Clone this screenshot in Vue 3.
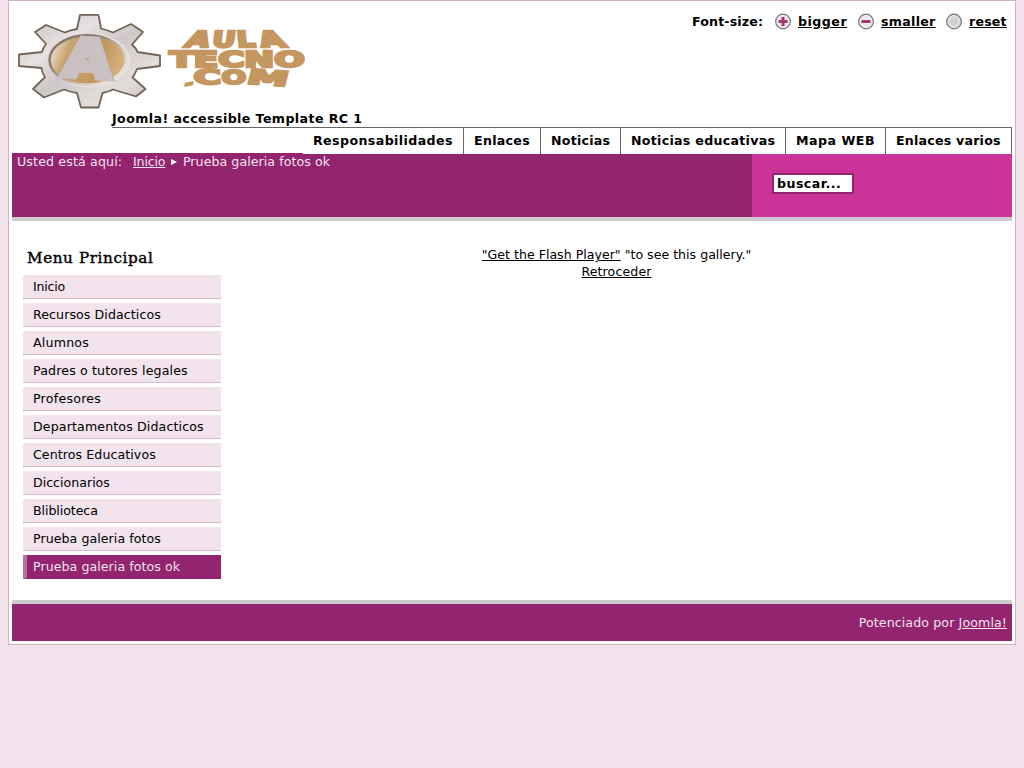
<script setup>
const tabs = [
  { name: 'Responsabilidades', width: 161, spacing: 0.41 },
  { name: 'Enlaces', width: 77, spacing: 0.3 },
  { name: 'Noticias', width: 80, spacing: 0.25 },
  { name: 'Noticias educativas', width: 165, spacing: 0.29 },
  { name: 'Mapa WEB', width: 100, spacing: 0.5 },
  { name: 'Enlaces varios', width: 126, spacing: 0.22 }
]
const sizes = [
  { name: 'bigger', width: 50, spacing: 0.5 },
  { name: 'smaller', width: 54, spacing: 0.3 },
  { name: 'reset', width: 39, spacing: 0.2 }
]
const menu = [
  { name: 'Inicio', spacing: -0.2 },
  { name: 'Recursos Didacticos', spacing: 0.08 },
  { name: 'Alumnos', spacing: 0.2 },
  { name: 'Padres o tutores legales', spacing: 0.15 },
  { name: 'Profesores', spacing: 0.25 },
  { name: 'Departamentos Didacticos', spacing: 0.13 },
  { name: 'Centros Educativos', spacing: 0.08 },
  { name: 'Diccionarios', spacing: 0 },
  { name: 'Bliblioteca', spacing: -0.08 },
  { name: 'Prueba galeria fotos', spacing: 0.06 },
  { name: 'Prueba galeria fotos ok', spacing: 0.06 }
]
</script>

<template>
  <div class="wrapper">
    <header class="header">
      <svg class="logo" width="300" height="104" viewBox="12 8 300 104">
        <defs>
          <linearGradient id="metal" x1="0" y1="0" x2="1" y2="1">
            <stop offset="0" stop-color="#c5bcbc" />
            <stop offset=".3" stop-color="#e6e0e0" />
            <stop offset=".5" stop-color="#d0c8c8" />
            <stop offset=".75" stop-color="#e3dddc" />
            <stop offset="1" stop-color="#bdb3b1" />
          </linearGradient>
          <linearGradient id="bronze" x1="0" y1="0" x2="1" y2=".25">
            <stop offset=".05" stop-color="#f1eadf" />
            <stop offset=".3" stop-color="#c9a470" />
            <stop offset=".75" stop-color="#c4975b" />
            <stop offset="1" stop-color="#d3ae7c" />
          </linearGradient>
          <linearGradient id="rim" x1="0" y1="0" x2="1" y2="1">
            <stop offset=".3" stop-color="#877a6d" />
            <stop offset=".65" stop-color="#cfc5bb" />
            <stop offset="1" stop-color="#f6f3ef" />
          </linearGradient>
        </defs>
        <path d="M80 14.800H97.500Q98.500 15 98.800 16L101 28.500Q107 30 113 32.500L131 24L143 32L132 44.500Q136 48 137.500 52L160 55.500V66L137 69Q135 74 132.500 77.500L145.500 89L136 96.500L113 89.500Q108 92 102.500 93L98.500 107.500H81L77 93Q70 92 64 89.500L44 97.500L33 89L45 77Q42 73 41.500 68L19 66V54.500L42 52Q43 48 46 44L35 32L46 25L65 32.500Q70 30 77 29Z" fill="url(#metal)" stroke="#716456" stroke-width="1.800" stroke-linejoin="round" />
        <ellipse cx="89.500" cy="60.500" rx="41" ry="27" fill="#e6e0dd" />
        <ellipse cx="87.500" cy="60" rx="38" ry="24.800" fill="url(#bronze)" stroke="url(#rim)" stroke-width="2.500" />
        <g transform="matrix(1 .06 -.1 1 62 75.500)">
          <text class="emblem" x="0" y="0" textLength="48" lengthAdjust="spacingAndGlyphs">A</text>
        </g>
        <g class="wordmark">
          <text transform="matrix(1.4 0 -.4 1 183.500 46.800)">A</text>
          <text transform="matrix(1.3 0 -.13 1 211.500 46.800)">U</text>
          <text transform="matrix(1.32 0 .1 1 237.500 46.800)">L</text>
          <text transform="matrix(1.5 0 .4 1 262 46.800)">A</text>
          <text transform="matrix(1 0 0 1 169.500 66.500)" textLength="135" lengthAdjust="spacingAndGlyphs">TECNO</text>
          <text class="low" transform="matrix(1.5 -.3 -.1 .7 183 86.500)">.</text>
          <text class="low" transform="matrix(1.85 0 .05 1 194 83.500)">C</text>
          <text class="low" transform="matrix(1.45 0 0 1 221.500 83.500)">O</text>
          <text class="low" transform="matrix(2.050 .14 -.25 1 246 83.500)">M</text>
        </g>
      </svg>
      <div class="sizes">
        <span class="label">Font-size:</span>
        <a v-for="(s, i) in sizes" :key="s.name">
          <svg width="18" height="18" viewBox="0 0 18 18">
            <circle cx="9" cy="8.500" r="7.300" :fill="i === 2 ? '#dedede' : '#eee9ee'" stroke="#777" stroke-width="1.200" />
            <path v-if="i < 2" d="M4.500 8.500H13.500" stroke="#a5386f" stroke-width="3" />
            <path v-if="i === 0" d="M9 4V13" stroke="#a5386f" stroke-width="3" />
            <circle v-if="i === 2" cx="9" cy="8.500" r="4" fill="#d1d1d1" />
          </svg><u :style="{ width: s.width + 'px', letterSpacing: s.spacing + 'px' }">{{ s.name }}</u>
        </a>
      </div>
      <div class="title">Joomla! accessible Template RC 1</div>
    </header>
    <nav class="tabs"><a v-for="t in tabs" :key="t.name" :style="{ width: t.width + 'px', letterSpacing: t.spacing + 'px' }">{{ t.name }}</a></nav>
    <div class="band">
      <div class="crumbs"><span>Usted está aquí:</span><u>Inicio</u><i class="arrow"></i><span>Prueba galeria fotos ok</span></div>
      <div class="search"><input value="buscar..." aria-label="buscar" /></div>
    </div>
    <main class="content">
      <aside>
        <h3>Menu Principal</h3>
        <ul><li v-for="(m, i) in menu" :key="m.name" :class="{ active: i === menu.length - 1 }" :style="{ letterSpacing: m.spacing + 'px' }">{{ m.name }}</li></ul>
      </aside>
      <section><div><u>"Get the Flash Player"</u> "to see this gallery."</div><div class="back"><u>Retroceder</u></div></section>
    </main>
    <footer>Potenciado por&nbsp;<u>Joomla!</u></footer>
  </div>
</template>

<style>
body { background: #f2e3ec; }
</style>
<style scoped>
.wrapper { box-sizing: border-box; width: 1008px; height: 645px; margin-left: 8px; padding: 0 3px 3px; border: 1px solid #d5aec5; background: #fff; font: 12.6px/17px "DejaVu Sans", sans-serif; color: #000; }
.header { position: relative; height: 126px; }
.logo { position: absolute; left: 0; top: 7px; }
.emblem { font: bold 51px "DejaVu Sans", sans-serif; fill: #c9c1c1; stroke: #c9c1c1; stroke-width: 6px; filter: drop-shadow(0 0 .6px #77685a); }
.wordmark { font: bold 22px "DejaVu Sans", sans-serif; fill: #c49760; stroke: #c49760; stroke-width: 2.500px; }
.wordmark .low { font-size: 20px; stroke-width: 2.300px; }
.sizes { position: absolute; right: 4px; top: 12px; display: flex; font-weight: bold; line-height: 18px; }
.sizes .label { width: 72px; letter-spacing: .15px; }
.sizes a { display: flex; margin-left: 10px; }
.sizes a:nth-of-type(2) { margin-left: 9px; }
.sizes svg { margin-right: 6px; }
.sizes u { white-space: nowrap; }
.title { position: absolute; left: 100px; top: 109px; font-weight: bold; letter-spacing: .42px; }
.tabs { display: flex; justify-content: flex-end; box-sizing: border-box; height: 27px; margin-left: 100px; border-top: 1px solid #666; font-weight: bold; line-height: 26px; }
.tabs a { box-sizing: border-box; padding-left: 10px; border-right: 1px solid #666; white-space: nowrap; }
.band { display: flex; height: 63px; border-bottom: 4px solid #d0c8cf; background: #93246f; }
.crumbs { display: flex; align-items: center; box-sizing: border-box; width: 740px; height: 17px; padding-left: 5px; color: #f2e3ec; margin-top: -1px; background: linear-gradient(#93246f, #93246f) no-repeat 0 0 / 291px 1px; }
.crumbs span:first-child { width: 116px; letter-spacing: .15px; }
.crumbs u { letter-spacing: -.15px; }
.crumbs span:last-child { letter-spacing: .06px; }
.arrow { width: 0; height: 0; margin: 0 5.500px 0 6px; border-left: 6px solid #fff; border-top: 3.500px solid transparent; border-bottom: 3.500px solid transparent; }
.search { box-sizing: border-box; width: 260px; padding: 19px 0 0 20px; background: #cc3399; }
.search input { display: block; box-sizing: border-box; width: 82px; height: 21px; padding: 0 3px; border: 2px solid #93246f; border-radius: 0; background: #fff; font: bold 12.6px "DejaVu Sans", sans-serif; letter-spacing: .45px; color: #000; }
.content { display: flex; height: 379px; }
aside { width: 198px; margin-left: 11px; }
h3 { margin: 27px 0 7px; padding-left: 4px; font: 500 15.200px/20px "DejaVu Serif", serif; letter-spacing: .6px; -webkit-text-stroke: .4px #000; }
ul { margin: 0; padding: 0; list-style: none; }
li { box-sizing: border-box; height: 24px; margin-bottom: 4px; padding-left: 10px; border-bottom: 1px solid #d5bdcb; background: #f2e3ec; line-height: 23px; }
li.active { padding-left: 6px; border-left: 4px solid #b770a0; border-bottom-color: #93246f; background: #93246f; color: #f2e3ec; }
section { width: 771px; padding-top: 25px; margin-left: 10px; text-align: center; }
.back { letter-spacing: .1px; }
footer { box-sizing: border-box; height: 41px; padding-right: 5px; border-top: 4px solid #ccc; background: #93246f; color: #f2e3ec; line-height: 37px; letter-spacing: .11px; text-align: right; }
</style>
